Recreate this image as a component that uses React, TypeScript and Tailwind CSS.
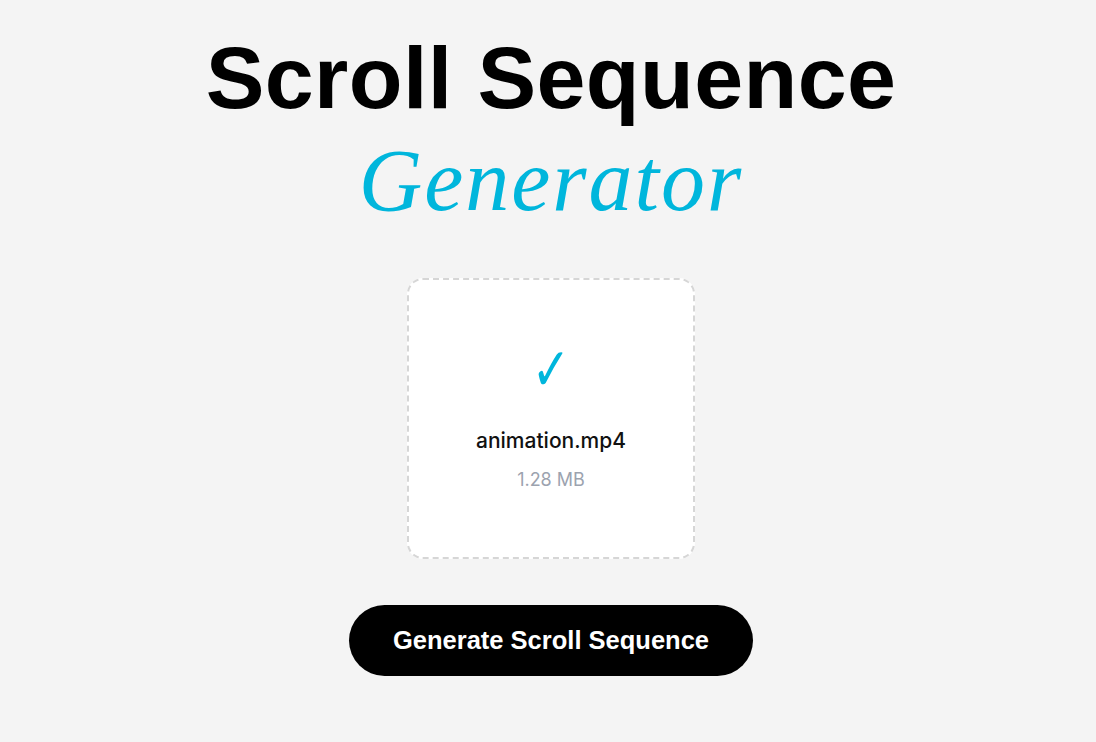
export default function App() {
  return (
    <div className="min-h-[742px] w-full bg-[#f4f4f4] flex flex-col items-center pt-[27px] pl-[6px]">
      <h1 className="text-center leading-[101px] text-[88px]">
        <span className="block font-['Liberation_Sans',Arial,sans-serif] font-bold text-black tracking-[0.4px]">
          Scroll Sequence
        </span>
        <span className="block font-['Liberation_Serif','Times_New_Roman',serif] italic font-normal text-[#00b6dc] tracking-[2px] translate-y-[2px]">
          Generator
        </span>
      </h1>

      {/* uploaded file box */}
      <div className="mt-[49px] w-[288px] h-[281px] bg-white rounded-2xl border-2 border-dashed border-[#d6d6d6] flex flex-col items-center justify-center">
        <span className="font-['DejaVu_Sans',sans-serif] text-[46px] leading-none text-[#00b6dc] scale-y-[1.3] -translate-y-[2px]">✓</span>
        <p className="mt-[36px] font-['Inter',sans-serif] font-medium text-[21px] text-[#111] leading-none">animation.mp4</p>
        <p className="mt-[20px] font-['Inter',sans-serif] text-[18px] text-[#9ca3af] leading-none">1.28 MB</p>
      </div>

      <button className="mt-[46px] h-[71px] px-[44px] rounded-full bg-black text-white font-['Liberation_Sans',Arial,sans-serif] font-bold text-[25.5px]">
        Generate Scroll Sequence
      </button>
    </div>
  );
}
